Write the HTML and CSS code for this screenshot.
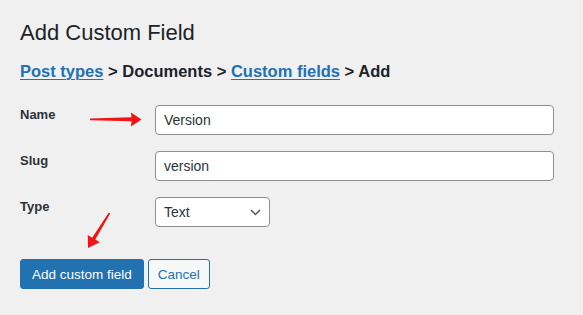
FILE: index.html
```html
<!DOCTYPE html>
<html lang="en">
<head>
<meta charset="utf-8">
<title>Add Custom Field</title>
<link rel="stylesheet" href="styles.css">
</head>
<body>
<div class="page">
  <h1 class="title">Add Custom Field</h1>
  <p class="crumbs"><a href="#">Post types</a> &gt; Documents &gt; <a href="#">Custom fields</a> &gt; Add</p>
  <div class="form">
    <div class="label">Name</div>
    <div class="input">Version</div>
    <div class="label">Slug</div>
    <div class="input">version</div>
    <div class="label">Type</div>
    <div class="field-cell">
      <div class="input select">
        <span>Text</span>
        <svg class="chevron" width="11" height="7" viewBox="0 0 11 7"><polyline points="1,1 5.5,5.5 10,1" fill="none" stroke="#50575e" stroke-width="1.5"/></svg>
      </div>
    </div>
  </div>
  <div class="actions">
    <div class="btn primary">Add custom field</div>
    <div class="btn secondary">Cancel</div>
  </div>
  <svg class="annotations" width="583" height="315" viewBox="0 0 583 315">
    <polygon points="90,118.4 131.5,117.3 131,112.6 141.5,119.6 131,126.6 131.5,121.3 90,120.2" fill="#f01414"/>
    <polygon points="110.2,213.4 95.3,239.5 99.7,242.3 88,248 87.8,234.9 92.2,237.7 108.8,212.6" fill="#f01414"/>
  </svg>
</div>
</body>
</html>
```

FILE: styles.css
```css
body {
  margin: 0;
  background: #f0f0f1;
  font-family: "Liberation Sans", Arial, sans-serif;
  color: #1d2327;
}

.page {
  position: relative;
  width: 583px;
  height: 315px;
  box-sizing: border-box;
  padding: 19px 0 0 20px;
  overflow: hidden;
}

.title {
  margin: 0;
  font-size: 22px;
  font-weight: 400;
  line-height: 28px;
  color: #1d2327;
}

.crumbs {
  margin: 13px 0 0;
  font-size: 16.5px;
  font-weight: 700;
  line-height: 22px;
  color: #1d2327;
}

.crumbs a {
  color: #2271b1;
  text-decoration: underline;
  text-underline-offset: 2px;
  text-decoration-thickness: 1px;
}

.form {
  margin-top: 23px;
  display: grid;
  grid-template-columns: 135px 399px;
  row-gap: 16px;
}

.label {
  font-size: 13px;
  font-weight: 700;
  line-height: 18px;
  padding-top: 1px;
  color: #2c3338;
}

.input {
  height: 30px;
  box-sizing: border-box;
  border: 1px solid #8c8f94;
  border-radius: 4px;
  background: #fff;
  font-size: 14px;
  padding: 0 8px;
  display: flex;
  align-items: center;
  color: #2c3338;
}

.select {
  width: 115px;
  justify-content: space-between;
  padding-right: 8px;
}

.chevron {
  display: block;
}

.actions {
  margin-top: 32px;
  display: flex;
  gap: 4px;
}

.btn {
  height: 30px;
  box-sizing: border-box;
  border: 1px solid #2271b1;
  border-radius: 3px;
  font-size: 13.5px;
  padding: 0 11px;
  display: flex;
  align-items: center;
}

.primary {
  background: #2271b1;
  color: #fff;
}

.secondary {
  background: #f6f7f7;
  color: #2271b1;
  padding: 0 9px;
}

.annotations {
  position: absolute;
  top: 0;
  left: 0;
  pointer-events: none;
}
```
